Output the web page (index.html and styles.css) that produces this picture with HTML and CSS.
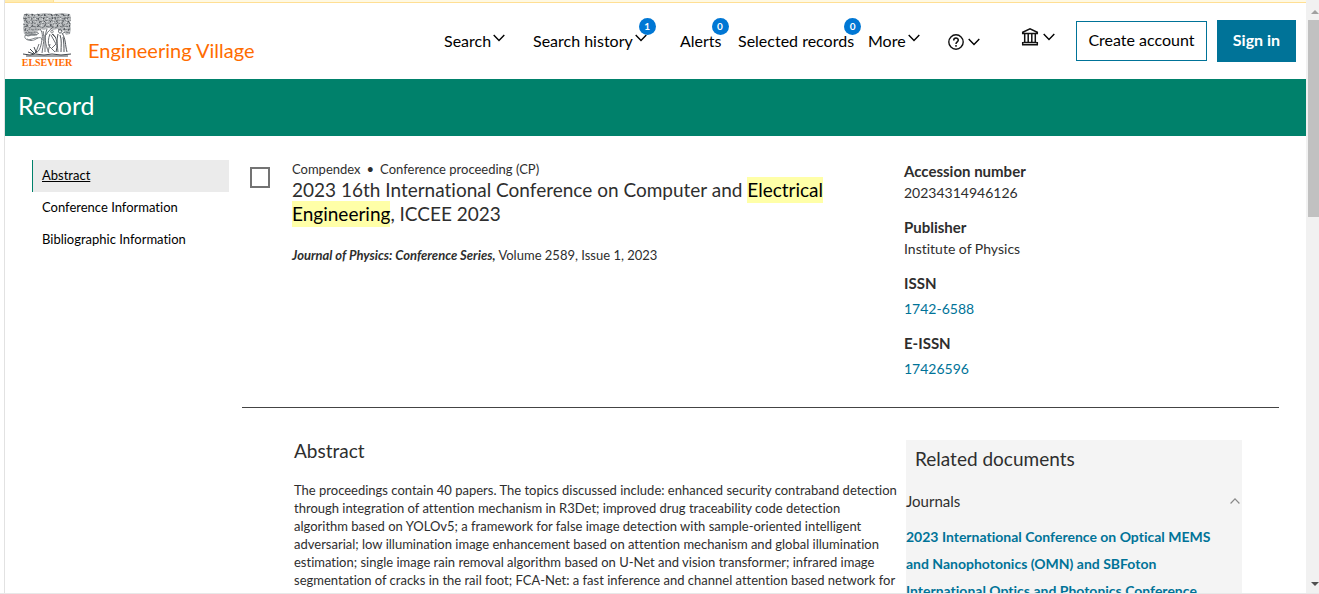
FILE: index.html
```html
<!DOCTYPE html>
<html lang="en">
<head>
<meta charset="utf-8">
<title>Engineering Village - Record</title>
<link rel="stylesheet" href="styles.css">
</head>
<body>
<svg class="defs" aria-hidden="true">
  <symbol id="chevron" viewBox="0 0 12 8"><path d="M.7 1 6 6.5 11.3 1" fill="none" stroke="currentColor" stroke-width="1.4"/></symbol>
</svg>
<div class="window">
  <div class="page">
    <div class="notice"><div class="notice-tab"></div></div>
    <header class="header">
      <a class="brand" href="#">
        <span class="elsevier">
          <svg class="tree" viewBox="0 0 50 44" aria-hidden="true">
            <g fill="none" stroke="#6c7074" stroke-width="1">
              <path d="M2 1q4-1 7 0l6 0 8-1 9 1 8-1 8 1 1 4-1 5 1 6-1 5-4 1-3-5-5-1-5 1-4-2-5 2-4-1-3 3-2 4-6 0-5-2-1-6 1-5-1-5z" fill="#b9bcbe" stroke="none"/>
              <path d="M2 2l3-1 2 2 3-2 3 2 2-2 4 2 3-2 2 2 4-2 3 2 3-2 3 2 3-2 3 2 4-1" stroke-dasharray="3 1"/>
              <path d="M1 5l3 1 2-2 4 2 2-2 4 2 2-2 4 1 3-1 3 2 3-2 4 1 3-1 3 2 4-2 4 1" stroke-dasharray="2 1"/>
              <path d="M2 8l2-1 3 2 3-2 3 1 4-1 2 2 4-2 3 1 3-1 3 2 4-2 3 1 4-1 2 2 4-2" stroke-dasharray="3 1 1 1"/>
              <path d="M1 11l3 1 3-2 4 1 2-1 4 2 3-2 3 1 3-1 4 2 3-2 3 1 3-1 4 2 3-2 3 1" stroke-dasharray="2 1"/>
              <path d="M2 14l3-1 3 2 2-2 4 1 3-1 3 2 3-2 4 1 3-1 3 2 4-2 3 1 3-1 5 1" stroke-dasharray="4 1"/>
              <path d="M2 17l3 1 2-2 4 1 3-1 4 1M36 16l3 2 3-2 3 1 3-1M3 20l3-1 4 1 3-1 3 1M41 20l3-1 4 1" stroke-dasharray="2 1"/>
              <path d="M5 1l-2 5 3 5-3 6M11 1l-2 4 2 5-2 7M17 1l-1 5 2 3-3 6M23 1l-2 6 3 3-2 5M29 1l2 4-3 4 1 5M35 1l-2 5 3 4-1 5M41 1l2 5-3 4 3 7M47 1l-2 5 3 5-2 9" stroke-dasharray="2 2" stroke="#3f4449"/>
              <path d="M8 2l1 5-2 5 2 5M14 2l-1 6 2 3M20 3l1 5-2 6M26 2l-1 6 2 5M32 3l-1 5 2 5M38 2l1 6-2 6M44 3l1 5-2 5 2 5" stroke="#eef0f0" stroke-dasharray="1 2"/>
              <path d="M10 20c-6-1-9 4-6 6s7 2 10 0 6-2 6 1M5 23c4-3 8 1 12-3M5 26c4 2 7-2 11-1M3 22l4 1 3-2 5 1" stroke="#797e82"/>
              <path d="M18 16c4 5 2 10 1 16-1 4-2 6-5 8M25 16c-3 8-2 15 2 24M21 18c2 7 0 14-1 22M23 22v17M17 31l-3 8M31 14c-3 3-5 4-7 8"/>
              <path d="M30 17c2 1 1 3 0 3s-2-2 0-3M28 21c-2 5-2 9-1 12l6 6M31 21c4 4 4 9 5 18M29 22l5 9-5 5M28 31l-2 8"/>
              <path d="M38 16c3 1 2 4 0 4s-2-3 0-4M36 21c-2 7 0 12-2 18M40 20c4 6 3 12 5 19M38 22c2 5 1 11 1 17M41 24c1 5 1 11 1 15M34 25l-4-4" stroke="#4f5459"/>
              <path d="M1 41l7 1 5-1 9 1 8-1 9 1 10-1M4 43h42M8 36l4 4M6 39l6 2 3-3M12 34l2 5" stroke="#43484d"/>
            </g>
          </svg>
          <span class="elsevier-name">ELSEVIER</span>
        </span>
        <span class="product">Engineering Village</span>
      </a>
      <nav class="nav" aria-label="Main">
        <button class="nav-item">Search<svg class="chev"><use href="#chevron"/></svg></button>
        <button class="nav-item">Search history<svg class="chev"><use href="#chevron"/></svg><span class="badge badge-history">1</span></button>
        <a class="nav-item" href="#">Alerts<span class="badge">0</span></a>
        <a class="nav-item" href="#">Selected records<span class="badge">0</span></a>
        <button class="nav-item">More<svg class="chev"><use href="#chevron"/></svg></button>
        <button class="nav-item nav-icon" aria-label="Help">
          <svg class="help" viewBox="0 0 16 16"><circle cx="8" cy="8" r="7.2" fill="none" stroke="#111" stroke-width="1.4"/><path d="M5.7 6.4c0-3.2 4.6-3 4.6-.3 0 1.8-2.3 1.7-2.3 3.9M8 11v1.7" fill="none" stroke="#111" stroke-width="1.5"/></svg>
          <svg class="chev"><use href="#chevron"/></svg>
        </button>
        <button class="nav-item nav-icon nav-bank" aria-label="Institution">
          <svg class="bank" viewBox="0 0 18 20"><path d="M1.7 6.5V5.2L9 1.8l7.3 3.4v1.3zM1 17.8h16M2.5 15.5h13M3.7 7v8M7.2 7v8M10.8 7v8M14.3 7v8M1.7 15v3M16.3 15v3" fill="none" stroke="#111" stroke-width="1.5"/></svg>
          <svg class="chev"><use href="#chevron"/></svg>
        </button>
      </nav>
      <div class="account">
        <button class="btn btn-outline">Create account</button>
        <button class="btn btn-primary">Sign in</button>
      </div>
    </header>
    <div class="band"><h1 class="band-title">Record</h1></div>
    <div class="content">
      <nav class="side" aria-label="Sections">
        <a class="side-link side-active" href="#abstract">Abstract</a>
        <a class="side-link" href="#conference">Conference Information</a>
        <a class="side-link" href="#bibliographic">Bibliographic Information</a>
      </nav>
      <main class="main">
        <section class="record">
          <input class="pick" type="checkbox" aria-label="Select record">
          <div class="summary">
            <div class="source"><span>Compendex</span><span>•</span><span>Conference proceeding (CP)</span></div>
            <h2 class="title">2023 16th International Conference on Computer and <mark>Electrical</mark><br><mark>Engineering</mark>, ICCEE 2023</h2>
            <p class="citation"><strong><em>Journal of Physics: Conference Series,</em></strong> Volume 2589, Issue 1, 2023</p>
          </div>
          <dl class="facts">
            <dt>Accession number</dt><dd>20234314946126</dd>
            <dt>Publisher</dt><dd>Institute of Physics</dd>
            <dt>ISSN</dt><dd class="fact-link"><a href="#">1742-6588</a></dd>
            <dt>E-ISSN</dt><dd class="fact-link"><a href="#">17426596</a></dd>
          </dl>
        </section>
        <section class="details">
          <article class="abstract" id="abstract">
            <h2 class="heading">Abstract</h2>
            <p class="abstract-text">The proceedings contain 40 papers. The topics discussed include: enhanced security contraband detection<br>through integration of attention mechanism in R3Det; improved drug traceability code detection<br>algorithm based on YOLOv5; a framework for false image detection with sample-oriented intelligent<br>adversarial; low illumination image enhancement based on attention mechanism and global illumination<br>estimation; single image rain removal algorithm based on U-Net and vision transformer; infrared image<br>segmentation of cracks in the rail foot; FCA-Net: a fast inference and channel attention based network for</p>
          </article>
          <aside class="related">
            <h2 class="heading related-heading">Related documents</h2>
            <button class="group">Journals<svg class="chev chev-up"><use href="#chevron"/></svg></button>
            <a class="related-link" href="#">2023 International Conference on Optical MEMS<br>and Nanophotonics (OMN) and SBFoton<br>International Optics and Photonics Conference</a>
          </aside>
        </section>
      </main>
    </div>
  </div>
  <div class="scrollbar" aria-hidden="true"><span class="arrow arrow-up"></span><span class="thumb"></span><span class="arrow arrow-down"></span></div>
</div>
</body>
</html>
```
FILE: styles.css
```css
* { box-sizing: border-box; }
body { margin: 0; font-family: Lato, "Noto Sans", sans-serif; font-size: 14px; font-variant-ligatures: none; color: #2e2e2e; background: #fff; }
button { font: inherit; color: inherit; background: none; border: 0; padding: 0; text-align: left; }
a { color: inherit; text-decoration: none; }
h1, h2, p, dl, dd { margin: 0; font-weight: 400; }
.defs { position: absolute; width: 0; height: 0; }
.window { display: flex; height: 100vh; padding-left: 4px; overflow: hidden; border-bottom: 1px solid #e8e8e8; }
.page { flex: 1; min-width: 0; border-left: 1px solid #e2e2e2; overflow: hidden; }

.notice { height: 3px; background: #fff9e3; border-bottom: 1px solid #ffdf94; }
.notice-tab { width: 49px; height: 2px; background: #ffecb0; border-right: 1px solid #ffdf94; }

.header { display: flex; align-items: center; height: 76px; padding: 0 10px 0 17px; color: #000; }
.brand { display: flex; align-items: center; gap: 16px; padding-bottom: 2px; }
.elsevier { display: flex; flex-direction: column; align-items: center; width: 50px; }
.tree { width: 50px; height: 44px; }
.elsevier-name { font: 700 10px/11px "Liberation Serif", serif; color: #ff6c00; }
.product { font-size: 20px; line-height: 24px; padding-top: 20px; color: #ff6c00; white-space: nowrap; }
.nav { display: grid; grid-template-columns: 89px 147px 58px 130px 80px 73px 55px; margin-left: auto; padding-bottom: 2px; }
.nav-item { position: relative; display: flex; align-items: center; justify-self: start; height: 24px; font-size: 16px; white-space: nowrap; }
.chev { width: 12px; height: 8px; margin-left: 2px; margin-bottom: 4px; }
.badge { position: absolute; top: -10px; right: -7px; width: 17px; height: 17px; border-radius: 50%; background: #0077d4; color: #fff; font-size: 10px; font-weight: 700; line-height: 17px; text-align: center; }
.badge-history { right: -9px; }
.nav-icon { gap: 4px; padding-top: 4px; }
.nav-icon .chev { margin: 0; }
.nav-bank { padding: 0 0 6px; }
.help { width: 16px; height: 16px; }
.bank { width: 18px; height: 20px; }
.account { display: flex; align-items: center; gap: 10px; }
.btn { height: 42px; padding-bottom: 3px; font-size: 16px; text-align: center; white-space: nowrap; }
.btn-outline { width: 131px; height: 40px; border: 1px solid #007398; background: #fff; }
.btn-primary { width: 79px; background: #007398; color: #fff; font-weight: 700; }

.band { height: 57px; padding: 10px 13px; background: #00816b; color: #fff; }
.band-title { font-size: 25px; line-height: 32px; }

.content { display: flex; gap: 13px; padding: 24px 27px 0; }
.side { width: 197px; flex: none; }
.side-link { display: flex; align-items: center; height: 32px; padding: 0 0 2px 10px; color: #000; font-size: 13px; }
.side-active { padding-left: 9px; border-left: 1px solid #00816b; background: #ebebeb; text-decoration: underline; }
.main { flex: 1; min-width: 0; }
.record { display: flex; height: 248px; padding-left: 8px; border-bottom: 1px solid #444; }
.pick { appearance: none; flex: none; width: 20px; height: 21px; margin: 7px 22px 0 0; border: 2px solid #737373; background: #fff; }
.summary { flex: 1; min-width: 0; white-space: nowrap; }
.source { display: flex; gap: 6px; font-size: 13px; line-height: 18px; }
.title { font-size: 19px; line-height: 24px; }
mark { padding: 1px 0 2px; color: #000; background: #ffffa8; }
.citation { margin-top: 19px; font-size: 13px; line-height: 20px; }
.facts { width: 375px; font-size: 15px; line-height: 22px; }
.facts dt { font-weight: 700; }
.facts dd { padding-bottom: 12px; font-size: 14px; }
.facts .fact-link { padding: 4px 0 12px; }
.fact-link a, .related-link { color: #007398; }

.details { display: flex; align-items: flex-start; gap: 22px; padding: 32px 37px 0 52px; }
.abstract { flex: 1; min-width: 0; white-space: nowrap; }
.heading { font-size: 19px; line-height: 22px; }
.abstract-text { margin-top: 19px; font-size: 13px; line-height: 18px; }
.related { flex: none; width: 336px; padding-top: 8px; background: #f4f4f4; }
.related-heading { padding-left: 9px; }
.group { display: flex; align-items: center; justify-content: space-between; width: 100%; height: 24px; margin: 19px 0 10px; padding-right: 2px; font-size: 15px; }
.chev-up { transform: rotate(180deg); width: 10px; margin: 0; color: #888; }
.related-link { display: block; font-size: 14px; font-weight: 700; line-height: 27px; white-space: nowrap; }

.scrollbar { display: flex; flex-direction: column; align-items: flex-end; width: 13px; padding: 10px 0 7px; background: #f1f1f1; }
.arrow { width: 0; height: 0; border: 4px solid transparent; }
.arrow-up { border-top: 0; border-bottom-color: #a0a0a0; margin-bottom: 6px; }
.thumb { width: 11px; height: 197px; background: #c1c1c1; }
.arrow-down { margin-top: auto; border-bottom: 0; border-top-color: #505050; }
```
